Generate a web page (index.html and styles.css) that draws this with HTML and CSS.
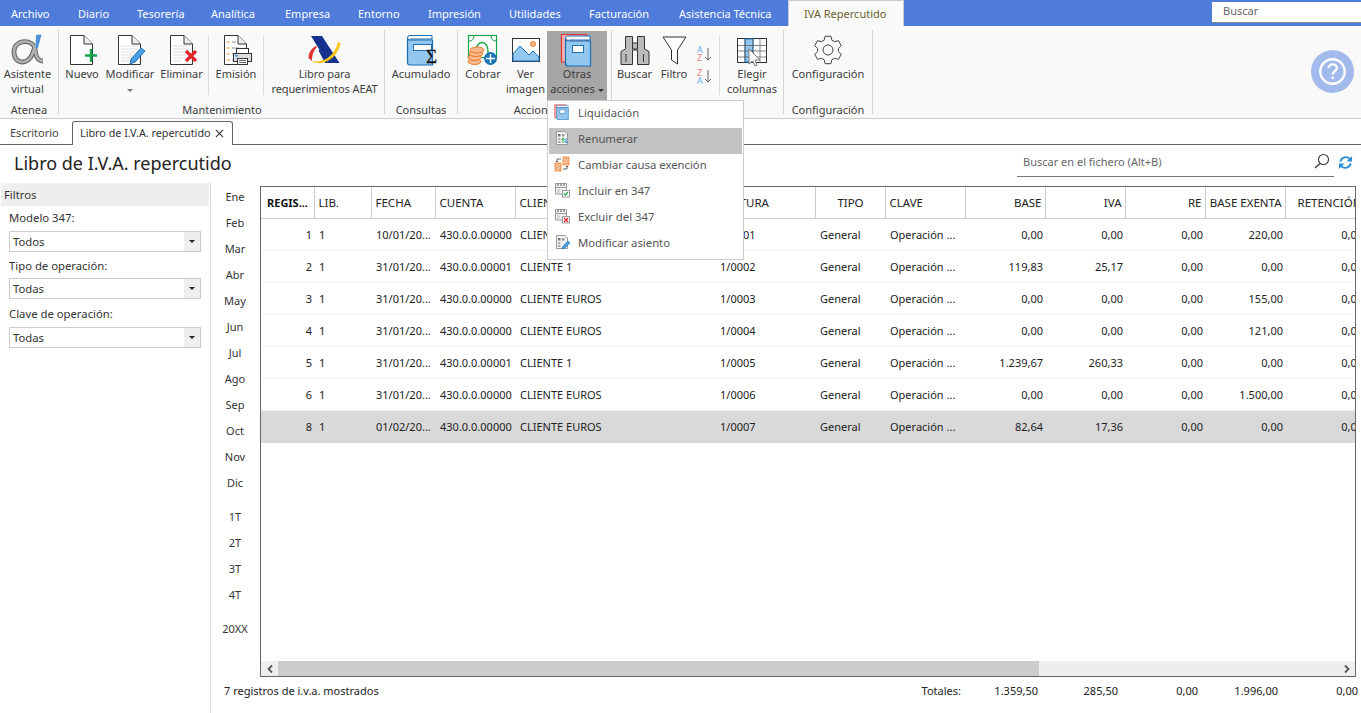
FILE: index.html
```html
<!DOCTYPE html>
<html lang="es">
<head>
<meta charset="utf-8">
<title>Libro de I.V.A. repercutido</title>
<link rel="stylesheet" href="styles.css">
</head>
<body>
<svg class="defs" aria-hidden="true">
  <symbol id="doc" viewBox="0 0 34 34"><path d="M5.500 2.500H19L27.500 11V31.500H5.500Z" fill="#fff" stroke="#333"/><path d="M19 2.500V11H27.500" fill="#eee" stroke="#333"/></symbol>
  <symbol id="lines" viewBox="0 0 34 34"><path d="M8 13H25M8 16H25M8 19H22M8 22H20M8 25H18M8 28H16" stroke="#ddd"/></symbol>
  <symbol id="book-pair" viewBox="0 0 34 34"><path d="M1.500 1.500H26V29H1.500Z" fill="#f6b3b3" stroke="#e2332e" stroke-width="1.200"/><path d="M5.500 5Q6 3 8 3H30V7H9" fill="#fff" stroke="#1b6fb5"/><path d="M5.500 5Q5.500 8 8 8H30.500V33H8Q5.500 33 5.500 30Z" fill="#93c7ef" stroke="#1b6fb5" stroke-width="1.200"/><rect x="12.500" y="12.500" width="11" height="7" fill="#fff" stroke="#1b6fb5"/></symbol>
  <symbol id="mini-doc" viewBox="0 0 16 16"><path d="M2.500 1.500H11L13.500 4V14.500H2.500Z" fill="#f4f4f4" stroke="#999"/><rect x="4" y="4" width="2.500" height="2.500" fill="#777"/><rect x="8" y="4" width="2.500" height="2.500" fill="#999"/><rect x="4" y="8" width="2.500" height="2" fill="#aaa"/><rect x="4" y="11" width="2.500" height="2" fill="#aaa"/></symbol>
  <symbol id="mini-347" viewBox="0 0 16 16"><path d="M1.500 1.500H12.500V12H1.500Z" fill="#f2f2f2" stroke="#999"/><path d="M1.500 5.500H12.500" stroke="#999"/><path d="M3 3H5M6 3H8M9 3H11" stroke="#555"/><path d="M3 8H6M3 10H6" stroke="#bbb"/></symbol>
</svg>

<header class="menu-bar">
  <nav class="menu-tabs">
    <span class="menu-tab">Archivo</span>
    <span class="menu-tab">Diario</span>
    <span class="menu-tab">Tesorería</span>
    <span class="menu-tab">Analítica</span>
    <span class="menu-tab">Empresa</span>
    <span class="menu-tab">Entorno</span>
    <span class="menu-tab">Impresión</span>
    <span class="menu-tab">Utilidades</span>
    <span class="menu-tab">Facturación</span>
    <span class="menu-tab">Asistencia Técnica</span>
    <span class="menu-tab menu-tab-active">IVA Repercutido</span>
  </nav>
  <div class="top-search">Buscar</div>
</header>

<section class="ribbon">
  <div class="group g-atenea">
    <div class="group-body">
      <div class="rbtn w-asist">
        <svg class="ico" viewBox="0 0 34 34"><path d="M23 13C18 6 3 7 3 19C3 29 12 31 17 27C21 24 23 18 24 12C24 20 25 28 32 28" fill="none" stroke="#666" stroke-width="4.800"/><path d="M23 13C18 6 3 7 3 19C3 29 12 31 17 27C21 24 23 18 24 12C24 20 25 28 32 28" fill="none" stroke="#b0b0b0" stroke-width="2.600"/><path d="M25 2L30.500 1.500L27 15H24.500Z" fill="#4e93d8"/></svg>
        <span class="lbl">Asistente<br>virtual</span>
      </div>
    </div>
    <div class="group-name">Atenea</div>
  </div>

  <div class="group g-mant">
    <div class="group-body">
      <div class="rbtn w-nuevo">
        <svg class="ico" viewBox="0 0 34 34"><use href="#doc"/><path d="M26 16V29M20 22.500H32" stroke="#12a54a" stroke-width="2.400"/></svg>
        <span class="lbl">Nuevo</span>
      </div>
      <div class="rbtn w-modif">
        <svg class="ico" viewBox="0 0 34 34"><use href="#doc"/><use href="#lines"/><path d="M17 31L18 26L28 15L32 18L22 29Z" fill="#4d9ede" stroke="#1f72b8"/></svg>
        <span class="lbl">Modificar<br><i class="caret"></i></span>
      </div>
      <div class="rbtn w-elim">
        <svg class="ico" viewBox="0 0 34 34"><use href="#doc"/><use href="#lines"/><path d="M21 18L31 28M31 18L21 28" stroke="#e0282c" stroke-width="3.200"/></svg>
        <span class="lbl">Eliminar</span>
      </div>
      <i class="rsep"></i>
      <div class="rbtn w-emis">
        <svg class="ico" viewBox="0 0 34 34"><use href="#doc"/><path d="M8 9H11M8 15H11M8 21H11M8 27H11" stroke="#ef9a2e" stroke-width="1.200"/><path d="M13 9H17M13 15H20M13 21H17M13 27H17" stroke="#888"/><rect x="17.500" y="15.500" width="12" height="5" fill="#fff" stroke="#333"/><rect x="14.500" y="20.500" width="18" height="8" fill="#ddd" stroke="#333"/><rect x="18.500" y="25.500" width="10" height="6" fill="#fff" stroke="#333"/><path d="M20 27.500H27M20 29.500H27" stroke="#666"/><rect x="16" y="22" width="3" height="1.500" fill="#2b8fd6"/></svg>
        <span class="lbl">Emisión</span>
      </div>
      <i class="rsep"></i>
      <div class="rbtn w-libro">
        <svg class="ico" viewBox="0 0 34 34"><path d="M3 3H14L31.500 30H20L13.500 20Z" fill="#14318f"/><path d="M17 30L10.500 17.500L13.500 15L20 30Z" fill="#14318f"/><path d="M5 28C16 30.500 27 22 30 9L32.500 10C30 24 17 33.500 5 29Z" fill="#f5c518"/><path d="M0.500 25C0.500 20 3.500 15 8 13L9 14C6 17 4 21 4 28Z" fill="#e0322a"/></svg>
        <span class="lbl">Libro para<br>requerimientos AEAT</span>
      </div>
    </div>
    <div class="group-name">Mantenimiento</div>
  </div>

  <div class="group g-cons">
    <div class="group-body">
      <div class="rbtn w-acum">
        <svg class="ico" viewBox="0 0 34 34"><path d="M3.500 5Q3.500 2.500 6 2.500H28V6H6" fill="#fff" stroke="#1b6fb5"/><path d="M3.500 5Q3.500 7 6 7H28.500V32H6Q3.500 32 3.500 29.500Z" fill="#93c7ef" stroke="#1b6fb5" stroke-width="1.200"/><rect x="9.500" y="11.500" width="18" height="6" fill="#fff" stroke="#1b6fb5"/><text class="sigma" x="22" y="29.500">Σ</text></svg>
        <span class="lbl">Acumulado</span>
      </div>
    </div>
    <div class="group-name">Consultas</div>
  </div>

  <div class="group g-acc">
    <div class="group-body">
      <div class="rbtn w-cobrar">
        <svg class="ico" viewBox="0 0 34 34"><rect x="2.500" y="2.500" width="28" height="22" fill="#fff" stroke="#15a34a" stroke-width="1.200"/><path d="M10 20C9 6 23 6 22 20" fill="none" stroke="#15a34a" stroke-width="1.500"/><path d="M3 8C6 8 8 6 8 3M30 8C27 8 25 6 25 3" fill="none" stroke="#15a34a"/><ellipse cx="8.500" cy="28.500" rx="6.500" ry="3" fill="#f5b98d" stroke="#ea7a25"/><ellipse cx="8.500" cy="24.500" rx="6.500" ry="3" fill="#f5b98d" stroke="#ea7a25"/><ellipse cx="10" cy="20.500" rx="7" ry="3" fill="#f5b98d" stroke="#ea7a25"/><ellipse cx="11" cy="17" rx="7" ry="3" fill="#f5b98d" stroke="#ea7a25"/><circle cx="24.500" cy="25.500" r="6.500" fill="#1a74b3"/><path d="M24.500 21V30M20 25.500H29" stroke="#fff" stroke-width="1.400"/></svg>
        <span class="lbl">Cobrar</span>
      </div>
      <div class="rbtn w-ver">
        <svg class="ico" viewBox="0 0 34 34"><rect x="3.500" y="5.500" width="27" height="23" fill="#fff" stroke="#333"/><path d="M4 28V21L11 13L20 22L24 18L30 24V28H4Z" fill="#93c7ef" stroke="#1f72b8"/><circle cx="24" cy="11" r="2.500" fill="#f5b98d" stroke="#ea7a25"/></svg>
        <span class="lbl">Ver<br>imagen</span>
      </div>
      <div class="rbtn w-otras rbtn-open">
        <svg class="ico" viewBox="0 0 34 34"><use href="#book-pair"/></svg>
        <span class="lbl">Otras<br>acciones <i class="caret caret-dark"></i></span>
      </div>
    </div>
    <div class="group-name">Acciones</div>
  </div>

  <div class="group g-busc">
    <div class="group-body">
      <div class="rbtn w-buscar">
        <svg class="ico" viewBox="0 0 34 34"><path d="M7.500 3.500H14.500V10H19.500V3.500H26.500V16L31 18.500V31.500H19.500V17H14.500V31.500H3V18.500L7.500 16Z" fill="#bbb" stroke="#333"/><path d="M14.500 10V16H19.500V10M8 21V29M25.500 21V29" fill="none" stroke="#333"/></svg>
        <span class="lbl">Buscar</span>
      </div>
      <div class="rbtn w-filtro">
        <svg class="ico" viewBox="0 0 34 34"><path d="M6 4H29L20.500 17V31L14.500 27V17Z" fill="#fff" stroke="#333" stroke-linejoin="round"/></svg>
        <span class="lbl">Filtro</span>
      </div>
      <div class="rbtn w-sort">
        <svg class="ico ico-sort" viewBox="0 0 26 58">
          <text class="az az-b" x="5" y="21">A</text><text class="az az-r" x="5" y="29">Z</text><path d="M16 16V28M13 25L16 28L19 25" fill="none" stroke="#666"/>
          <text class="az az-r" x="5" y="44">Z</text><text class="az az-b" x="5" y="52">A</text><path d="M16 38V50M13 47L16 50L19 47" fill="none" stroke="#666"/>
        </svg>
      </div>
      <i class="rsep"></i>
      <div class="rbtn w-elegir">
        <svg class="ico" viewBox="0 0 34 34"><rect x="2.500" y="5.500" width="29" height="24" fill="#fff" stroke="#333"/><rect x="10" y="6" width="8" height="23" fill="#93c7ef" stroke="#1f72b8"/><path d="M10 6V29M18 6V29M25 6V29M3 12.500H31M3 18H31M3 24H31" stroke="#555" stroke-width=".7"/><path d="M14 16V31L17.500 28L20 33L22 32L20 27H25Z" fill="#fff" stroke="#777"/></svg>
        <span class="lbl">Elegir<br>columnas</span>
      </div>
    </div>
    <div class="group-name"></div>
  </div>

  <div class="group g-conf">
    <div class="group-body">
      <div class="rbtn w-conf">
        <svg class="ico" viewBox="-17 -17 34 34"><path d="M-3.900-9.700L-2.900-13.700H2.900L3.900-9.700L6.500-8.300L10.400-9.400L13.300-4.300L10.400-1.500V1.500L13.300 4.300L10.400 9.400L6.500 8.300L3.900 9.700L2.900 13.700H-2.900L-3.900 9.700L-6.500 8.300L-10.400 9.400L-13.300 4.300L-10.400 1.500V-1.500L-13.300-4.300L-10.400-9.400L-6.500-8.300Z" fill="none" stroke="#444" stroke-linejoin="round"/><circle r="5" fill="none" stroke="#444"/></svg>
        <span class="lbl">Configuración</span>
      </div>
    </div>
    <div class="group-name">Configuración</div>
  </div>

  <div class="help-circle">
    <svg viewBox="0 0 44 44" class="help-ico"><circle cx="22" cy="22" r="12.500" fill="none" stroke="#fff" stroke-width="2.400"/><path d="M18 18.500C18 13.500 26.500 13.500 26.500 18.500C26.500 21.500 22.200 21.500 22.200 25" fill="none" stroke="#fff" stroke-width="2.400"/><circle cx="22.200" cy="28.500" r="1.500" fill="#fff"/></svg>
  </div>
</section>

<div class="doc-tabs">
  <span class="doc-tab">Escritorio</span>
  <span class="doc-tab doc-tab-active">Libro de I.V.A. repercutido
    <svg class="close-ico" viewBox="0 0 10 10"><path d="M1 1L9 9M9 1L1 9" stroke="#333" stroke-width="1.200"/></svg>
  </span>
</div>

<div class="title-row">
  <h1 class="title">Libro de I.V.A. repercutido</h1>
  <div class="file-search">
    <span class="file-search-text">Buscar en el fichero (Alt+B)</span>
    <svg class="search-ico" viewBox="0 0 16 16"><circle cx="9.500" cy="6.500" r="5" fill="none" stroke="#333" stroke-width="1.100"/><path d="M6 10.500L1 15" stroke="#333" stroke-width="1.300"/></svg>
  </div>
  <svg class="refresh-ico" viewBox="0 0 16 16"><path d="M2.500 7A5.800 5.800 0 0 1 12.500 4.200" fill="none" stroke="#2b8fd6" stroke-width="2"/><path d="M15 1V7H9Z" fill="#2b8fd6"/><path d="M13.500 9A5.800 5.800 0 0 1 3.500 11.800" fill="none" stroke="#2b8fd6" stroke-width="2"/><path d="M1 15V9H7Z" fill="#2b8fd6"/></svg>
</div>

<main class="main">
  <aside class="filters">
    <div class="filters-head">Filtros</div>
    <label class="f-label">Modelo 347:</label>
    <div class="select"><span>Todos</span><b class="select-btn"><i class="caret caret-black"></i></b></div>
    <label class="f-label f-label-2">Tipo de operación:</label>
    <div class="select"><span>Todas</span><b class="select-btn"><i class="caret caret-black"></i></b></div>
    <label class="f-label f-label-3">Clave de operación:</label>
    <div class="select"><span>Todas</span><b class="select-btn"><i class="caret caret-black"></i></b></div>
  </aside>

  <div class="content">
    <div class="content-top">
      <div class="periods">
        <span>Ene</span><span>Feb</span><span>Mar</span><span>Abr</span><span>May</span><span>Jun</span><span>Jul</span><span>Ago</span><span>Sep</span><span>Oct</span><span>Nov</span><span>Dic</span>
        <span class="p-gap">1T</span><span>2T</span><span>3T</span><span>4T</span>
        <span class="p-gap">20XX</span>
      </div>
      <div class="grid-box">
        <div class="grid-scroll">
          <table class="grid">
            <colgroup>
              <col class="c-reg"><col class="c-lib"><col class="c-fec"><col class="c-cta"><col class="c-cli"><col class="c-fac"><col class="c-tip"><col class="c-cla"><col class="c-num"><col class="c-num"><col class="c-num"><col class="c-num"><col class="c-num">
            </colgroup>
            <thead>
              <tr><th class="reg">REGIS...</th><th>LIB.</th><th>FECHA</th><th>CUENTA</th><th>CLIENTE</th><th>FACTURA</th><th class="ctr">TIPO</th><th>CLAVE</th><th class="r">BASE</th><th class="r">IVA</th><th class="r">RE</th><th class="r">BASE EXENTA</th><th class="r">RETENCIÓN</th></tr>
            </thead>
            <tbody>
              <tr><td class="r">1</td><td>1</td><td>10/01/20...</td><td>430.0.0.00000</td><td>CLIENTE EUROS</td><td>1/0001</td><td>General</td><td>Operación ...</td><td class="r">0,00</td><td class="r">0,00</td><td class="r">0,00</td><td class="r">220,00</td><td class="r">0,00</td></tr>
              <tr><td class="r">2</td><td>1</td><td>31/01/20...</td><td>430.0.0.00001</td><td>CLIENTE 1</td><td>1/0002</td><td>General</td><td>Operación ...</td><td class="r">119,83</td><td class="r">25,17</td><td class="r">0,00</td><td class="r">0,00</td><td class="r">0,00</td></tr>
              <tr><td class="r">3</td><td>1</td><td>31/01/20...</td><td>430.0.0.00000</td><td>CLIENTE EUROS</td><td>1/0003</td><td>General</td><td>Operación ...</td><td class="r">0,00</td><td class="r">0,00</td><td class="r">0,00</td><td class="r">155,00</td><td class="r">0,00</td></tr>
              <tr><td class="r">4</td><td>1</td><td>31/01/20...</td><td>430.0.0.00000</td><td>CLIENTE EUROS</td><td>1/0004</td><td>General</td><td>Operación ...</td><td class="r">0,00</td><td class="r">0,00</td><td class="r">0,00</td><td class="r">121,00</td><td class="r">0,00</td></tr>
              <tr><td class="r">5</td><td>1</td><td>31/01/20...</td><td>430.0.0.00001</td><td>CLIENTE 1</td><td>1/0005</td><td>General</td><td>Operación ...</td><td class="r">1.239,67</td><td class="r">260,33</td><td class="r">0,00</td><td class="r">0,00</td><td class="r">0,00</td></tr>
              <tr><td class="r">6</td><td>1</td><td>31/01/20...</td><td>430.0.0.00000</td><td>CLIENTE EUROS</td><td>1/0006</td><td>General</td><td>Operación ...</td><td class="r">0,00</td><td class="r">0,00</td><td class="r">0,00</td><td class="r">1.500,00</td><td class="r">0,00</td></tr>
              <tr class="sel"><td class="r">8</td><td>1</td><td>01/02/20...</td><td>430.0.0.00000</td><td>CLIENTE EUROS</td><td>1/0007</td><td>General</td><td>Operación ...</td><td class="r">82,64</td><td class="r">17,36</td><td class="r">0,00</td><td class="r">0,00</td><td class="r">0,00</td></tr>
            </tbody>
          </table>
        </div>
        <div class="hscroll">
          <span class="h-arrow"><svg viewBox="0 0 8 10" class="h-ico"><path d="M6 1.500L2.500 5L6 8.500" fill="none" stroke="#555" stroke-width="1.800"/></svg></span>
          <span class="h-thumb"></span>
          <span class="h-arrow"><svg viewBox="0 0 8 10" class="h-ico"><path d="M2 1.500L5.500 5L2 8.500" fill="none" stroke="#555" stroke-width="1.800"/></svg></span>
        </div>
      </div>
    </div>
    <footer class="foot">
      <span class="foot-count">7 registros de i.v.a. mostrados</span>
      <span class="foot-label">Totales:</span>
      <span class="foot-num foot-first">1.359,50</span>
      <span class="foot-num">285,50</span>
      <span class="foot-num">0,00</span>
      <span class="foot-num">1.996,00</span>
      <span class="foot-num">0,00</span>
    </footer>
  </div>
</main>

<div class="dropdown">
  <div class="dd-item"><svg class="dd-ico" viewBox="0 0 34 34"><use href="#book-pair"/></svg>Liquidación</div>
  <div class="dd-item dd-hover"><svg class="dd-ico" viewBox="0 0 16 16"><use href="#mini-doc"/><path d="M9 13V8M7.500 9.500L9 8L10.500 9.500" fill="none" stroke="#12a54a"/><path d="M12 8V13M10.500 11.500L12 13L13.500 11.500" fill="none" stroke="#2b8fd6"/></svg>Renumerar</div>
  <div class="dd-item"><svg class="dd-ico" viewBox="0 0 16 16"><rect x="1" y="7" width="6" height="8" fill="#f5b98d" stroke="#ea7a25" stroke-width=".7"/><rect x="9" y="1" width="6" height="8" fill="#f5b98d" stroke="#ea7a25" stroke-width=".7"/><path d="M7 3H3V6M2 5L3 6L4 5M9 13H13V10M12 11L13 10L14 11" fill="none" stroke="#444" stroke-width=".8"/></svg>Cambiar causa exención</div>
  <div class="dd-item"><svg class="dd-ico" viewBox="0 0 16 16"><use href="#mini-347"/><rect x="8.500" y="8.500" width="7" height="6.500" fill="#fff" stroke="#999"/><path d="M10 11.500L11.500 13L14 10" fill="none" stroke="#12a54a" stroke-width="1.200"/></svg>Incluir en 347</div>
  <div class="dd-item"><svg class="dd-ico" viewBox="0 0 16 16"><use href="#mini-347"/><rect x="8.500" y="8.500" width="7" height="6.500" fill="#fff" stroke="#999"/><path d="M10 10L14 14M14 10L10 14" stroke="#e0282c" stroke-width="1.400"/></svg>Excluir del 347</div>
  <div class="dd-item"><svg class="dd-ico" viewBox="0 0 16 16"><use href="#mini-doc"/><path d="M8 15L9 12L14 7L16 9L11 14Z" fill="#4d9ede" stroke="#1f72b8" stroke-width=".6"/></svg>Modificar asiento</div>
</div>
</body>
</html>
```

FILE: styles.css
```css
* { box-sizing: border-box; }
html, body { margin: 0; padding: 0; }
body {
  width: 1361px;
  height: 713px;
  overflow: hidden;
  position: relative;
  background: #fff;
  font-family: "Noto Sans", "Open Sans", sans-serif;
  font-size: 11px;
  color: #333;
}
.defs { position: absolute; width: 0; height: 0; }

/* top menu */
.menu-bar {
  display: flex;
  height: 26px;
  background: #4f7cdb;
  position: relative;
}
.menu-tabs {
  display: grid;
  grid-template-columns: 67px 59px 74px 74px 73px 70px 81px 80px 90px 120px 116px;
  height: 26px;
  margin-right: auto;
}
.menu-tab { padding: 6px 0 0 11px; line-height: 16px; color: #fff; white-space: nowrap; }
.menu-tab-active {
  background: #f9f9f9;
  color: #6d5f2d;
  border: 1px solid #ccc;
  border-bottom: none;
  padding: 5px 0 0 15px;
}
.top-search {
  width: 149px;
  height: 21px;
  margin-top: 2px;
  padding: 1px 0 0 11px;
  background: #fff;
  border-bottom: 1px solid #888;
  color: #666;
  line-height: 16px;
}

/* ribbon */
.ribbon {
  display: flex;
  height: 93px;
  padding-top: 4px;
  background: #f9f9f9;
  border-bottom: 1px solid #ccc;
  position: relative;
}
.group {
  display: flex;
  flex-direction: column;
  height: 84px;
  border-right: 1px solid #d4d4d4;
}
.g-atenea { width: 59px; }
.g-mant { width: 326px; padding-left: 1px; }
.g-cons { width: 73px; }
.g-acc { width: 154px; padding-left: 4px; }
.g-busc { width: 172px; }
.g-conf { width: 89px; }
.group-body { display: flex; height: 72px; padding-top: 1px; }
.group-name { text-align: center; line-height: 16px; height: 12px; color: #3c3c3c; white-space: nowrap; }
.rbtn {
  display: flex;
  flex-direction: column;
  align-items: center;
  height: 69px;
  padding-top: 2px;
  text-align: center;
}
.rbtn-open { background: #a6a6a6; }
.ico { width: 34px; height: 34px; display: block; flex: none; }
.ico-sort { width: 26px; height: 58px; margin-top: -1px; }
.lbl { margin-top: -1px; line-height: 15px; color: #3c3c3c; white-space: nowrap; }
.w-asist { width: 55px; }
.w-nuevo { width: 44px; }
.w-modif { width: 52px; }
.w-elim { width: 51px; }
.w-emis { width: 52px; }
.w-libro { width: 119px; }
.w-libro .lbl { letter-spacing: -.1px; }
.w-acum { width: 72px; }
.w-cobrar { width: 42px; }
.w-ver { width: 43px; }
.w-otras { width: 60px; }
.w-buscar { width: 45px; }
.w-filtro { width: 34px; }
.w-sort { width: 27px; }
.w-elegir { width: 62px; }
.w-conf { width: 88px; }
.rsep { width: 1px; height: 59px; margin: 5px 1px 0; background: #dcdcdc; flex: none; }
.caret {
  display: inline-block;
  width: 0;
  height: 0;
  vertical-align: middle;
  border: 3px solid transparent;
  border-top: 3px solid #777;
  border-bottom: none;
}
.caret-dark { border-top-color: #333; }
.caret-black { border-top-color: #222; }
.sigma { font-family: "Liberation Serif", serif; font-size: 19px; fill: #111; stroke: #111; stroke-width: .3; }
.az { font-family: "Noto Sans", sans-serif; font-size: 9px; }
.az-b { fill: #6aaee6; }
.az-r { fill: #ee7b7b; }
.help-circle {
  position: absolute;
  left: 1311px;
  top: 24px;
  width: 43px;
  height: 43px;
  border-radius: 50%;
  background: #a3bbec;
}
.help-ico { width: 43px; height: 43px; display: block; }

/* document tabs */
.doc-tabs {
  display: flex;
  height: 26px;
  padding-top: 2px;
  border-bottom: 1px solid #666;
}
.doc-tab { padding: 4px 0 0 10px; width: 72px; line-height: 16px; color: #444; white-space: nowrap; }
.doc-tab-active {
  display: flex;
  width: 161px;
  height: 24px;
  padding: 3px 0 0 7px;
  border: 1px solid #666;
  border-bottom: none;
  border-radius: 3px 3px 0 0;
  background: #fff;
  position: relative;
  color: #333;
  font-size: 10.8px;
}
.close-ico { width: 9px; height: 9px; margin: 4px 0 0 auto; position: relative; left: -8px; }

/* title */
.title-row { display: flex; height: 38px; }
.title {
  margin: 0 auto 0 14px;
  font-size: 18px;
  font-weight: 400;
  line-height: 36px;
  color: #222;
}
.file-search {
  display: flex;
  align-items: center;
  width: 317px;
  height: 32px;
  padding-left: 6px;
  border-bottom: 1px solid #777;
}
.file-search-text { color: #666; margin-right: auto; position: relative; top: 1px; }
.search-ico { width: 16px; height: 16px; margin-right: 4px; }
.refresh-ico { width: 15px; height: 15px; margin: 10px 8px 0 4px; }

/* layout */
.main { display: flex; height: 530px; }
.filters { width: 211px; border-right: 1px solid #ddd; padding: 0 9px 0 1px; font-size: 11.3px; }
.filters-head { height: 23px; margin-right: -8px; padding-left: 3px; line-height: 24px; background: #eee; color: #333; }
.f-label { display: block; height: 18px; line-height: 18px; margin: 3px 0 4px 8px; color: #333; }
.f-label-2 { margin: 5px 0 3px 8px; }
.f-label-3 { margin: 6px 0 4px 8px; }
.select {
  display: flex;
  justify-content: space-between;
  height: 21px;
  width: 192px;
  margin-left: 8px;
  padding-left: 3px;
  line-height: 20px;
  border: 1px solid #ccc;
  background: #fff;
  color: #333;
}
.select-btn { width: 16px; background: #eee; display: flex; align-items: center; justify-content: center; }

.content { flex: 1; display: flex; flex-direction: column; min-width: 0; }
.content-top { display: flex; height: 494px; }
.periods { width: 49px; display: flex; flex-direction: column; padding: 1px 1px 0 0; }
.periods span { height: 26px; line-height: 26px; text-align: center; color: #333; flex: none; }
.periods .p-gap { margin-top: 8px; }
.grid-box {
  width: 1096px;
  height: 491px;
  margin-top: 3px;
  border: 1px solid #666;
  display: flex;
  flex-direction: column;
}
.grid-scroll { flex: 1; overflow: hidden; min-height: 0; }
.grid { table-layout: fixed; width: 1104px; border-collapse: collapse; color: #222; }
.c-reg { width: 53px; }
.c-lib { width: 57px; }
.c-fec { width: 64px; }
.c-cta { width: 80px; }
.c-cli { width: 200px; }
.c-fac { width: 100px; }
.c-tip { width: 70px; }
.c-cla { width: 80px; }
.c-num { width: 80px; }
.grid th {
  height: 31px;
  padding: 0 3px 0 4px;
  font-size: 11.5px;
  font-weight: 400;
  text-align: left;
  border-right: 1px solid #ccc;
  border-bottom: 1px solid #ccc;
  white-space: nowrap;
  overflow: hidden;
}
.grid th.reg { font-size: 11px; font-weight: 700; padding: 0 0 0 6px; color: #111; }
.grid th.ctr { text-align: center; }
.grid td {
  height: 32px;
  padding: 0 2px 0 5px;
  border-bottom: 1px solid #eee;
  white-space: nowrap;
  overflow: hidden;
}
.grid .r { text-align: right; }
.grid th.r { padding-right: 3px; }
.grid .sel td { background: #d9d9d9; border-bottom-color: #d9d9d9; }
.hscroll { display: flex; height: 15px; flex: none; background: #eee; }
.h-arrow { width: 17px; display: flex; align-items: center; justify-content: center; }
.h-thumb { width: 761px; background: #ccc; margin-right: auto; }
.h-ico { width: 8px; height: 10px; }

.foot { display: flex; height: 30px; line-height: 28px; color: #222; }
.foot-count { margin-left: 13px; margin-right: auto; }
.foot-label { padding-right: 0; }
.foot-num { width: 80px; text-align: right; }
.foot-first { width: 77px; }
.foot-num:last-child { margin-right: 3px; }

/* dropdown */
.dropdown {
  position: absolute;
  left: 547px;
  top: 100px;
  width: 197px;
  height: 160px;
  padding: 1px;
  background: #fff;
  border: 1px solid #ccc;
}
.dd-item {
  display: flex;
  align-items: center;
  height: 26px;
  padding: 0 0 6px 5px;
  font-size: 11.3px;
  color: #555;
  white-space: nowrap;
}
.dd-hover { background: #c2c2c2; }
.dd-ico { width: 16px; height: 16px; margin-right: 8px; flex: none; }
```
